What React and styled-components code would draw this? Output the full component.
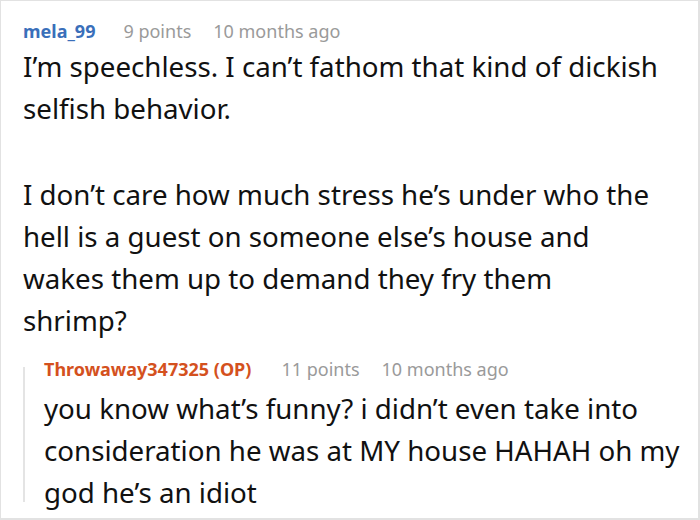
import React from "react";
import styled, { createGlobalStyle } from "styled-components";

const Global = createGlobalStyle`
  html, body { margin: 0; padding: 0; background: #ffffff; }
  body { font-family: "Noto Sans", "Open Sans", sans-serif; }
`;

const Card = styled.div`
  box-sizing: border-box;
  width: 700px;
  height: 520px;
  border: 1px solid #e2e2e2;
  border-right-width: 2px;
  border-bottom-width: 2px;
  padding: 17px 8px 0 22px;
  overflow: hidden;
  background: #fff;
`;

const Meta = styled.div`
  display: flex;
  align-items: baseline;
  font-size: 18px;
  line-height: 26px;
  color: #9a9a9a;
`;

const Author = styled.span`
  font-weight: 700;
  color: ${(p) => p.$color};
  margin-right: ${(p) => p.$gap}px;
`;

const Stat = styled.span`
  margin-right: 22px;
`;

const Body = styled.div`
  margin-top: ${(p) => p.$mt || 0}px;
  padding-right: ${(p) => p.$pr || 0}px;
  font-size: 27.7px;
  line-height: 42px;
  color: #111;
`;

const Para = styled.p`
  margin: 0 0 44px;
  &:last-child { margin-bottom: 0; }
`;

const Reply = styled.div`
  display: flex;
  margin-top: 15px;
`;

const Rail = styled.div`
  flex: 0 0 2px;
  background: #e4e4e4;
  margin: 11px 0 11px;
`;

const ReplyContent = styled.div`
  flex: 1;
  padding-left: 19px;
`;

export default function App() {
  return (
    <>
      <Global />
      <Card>
        <Meta>
          <Author $color="#3a6fba" $gap={28}>mela_99</Author>
          <Stat>9 points</Stat>
          <Stat>10 months ago</Stat>
        </Meta>
        <Body $mt={1} $pr={31}>
          <Para>I’m speechless. I can’t fathom that kind of dickish selfish behavior.</Para>
          <Para>
            I don’t care how much stress he’s under who the hell is a guest on someone else’s house and wakes them up to demand they fry them shrimp?
          </Para>
        </Body>
        <Reply>
          <Rail />
          <ReplyContent>
            <Meta>
              <Author $color="#d4511e" $gap={30}>Throwaway347325 (OP)</Author>
              <Stat>11 points</Stat>
              <Stat>10 months ago</Stat>
            </Meta>
            <Body $mt={5}>
              <Para>you know what’s funny? i didn’t even take into consideration he was at MY house HAHAH oh my god he’s an idiot</Para>
            </Body>
          </ReplyContent>
        </Reply>
      </Card>
    </>
  );
}
